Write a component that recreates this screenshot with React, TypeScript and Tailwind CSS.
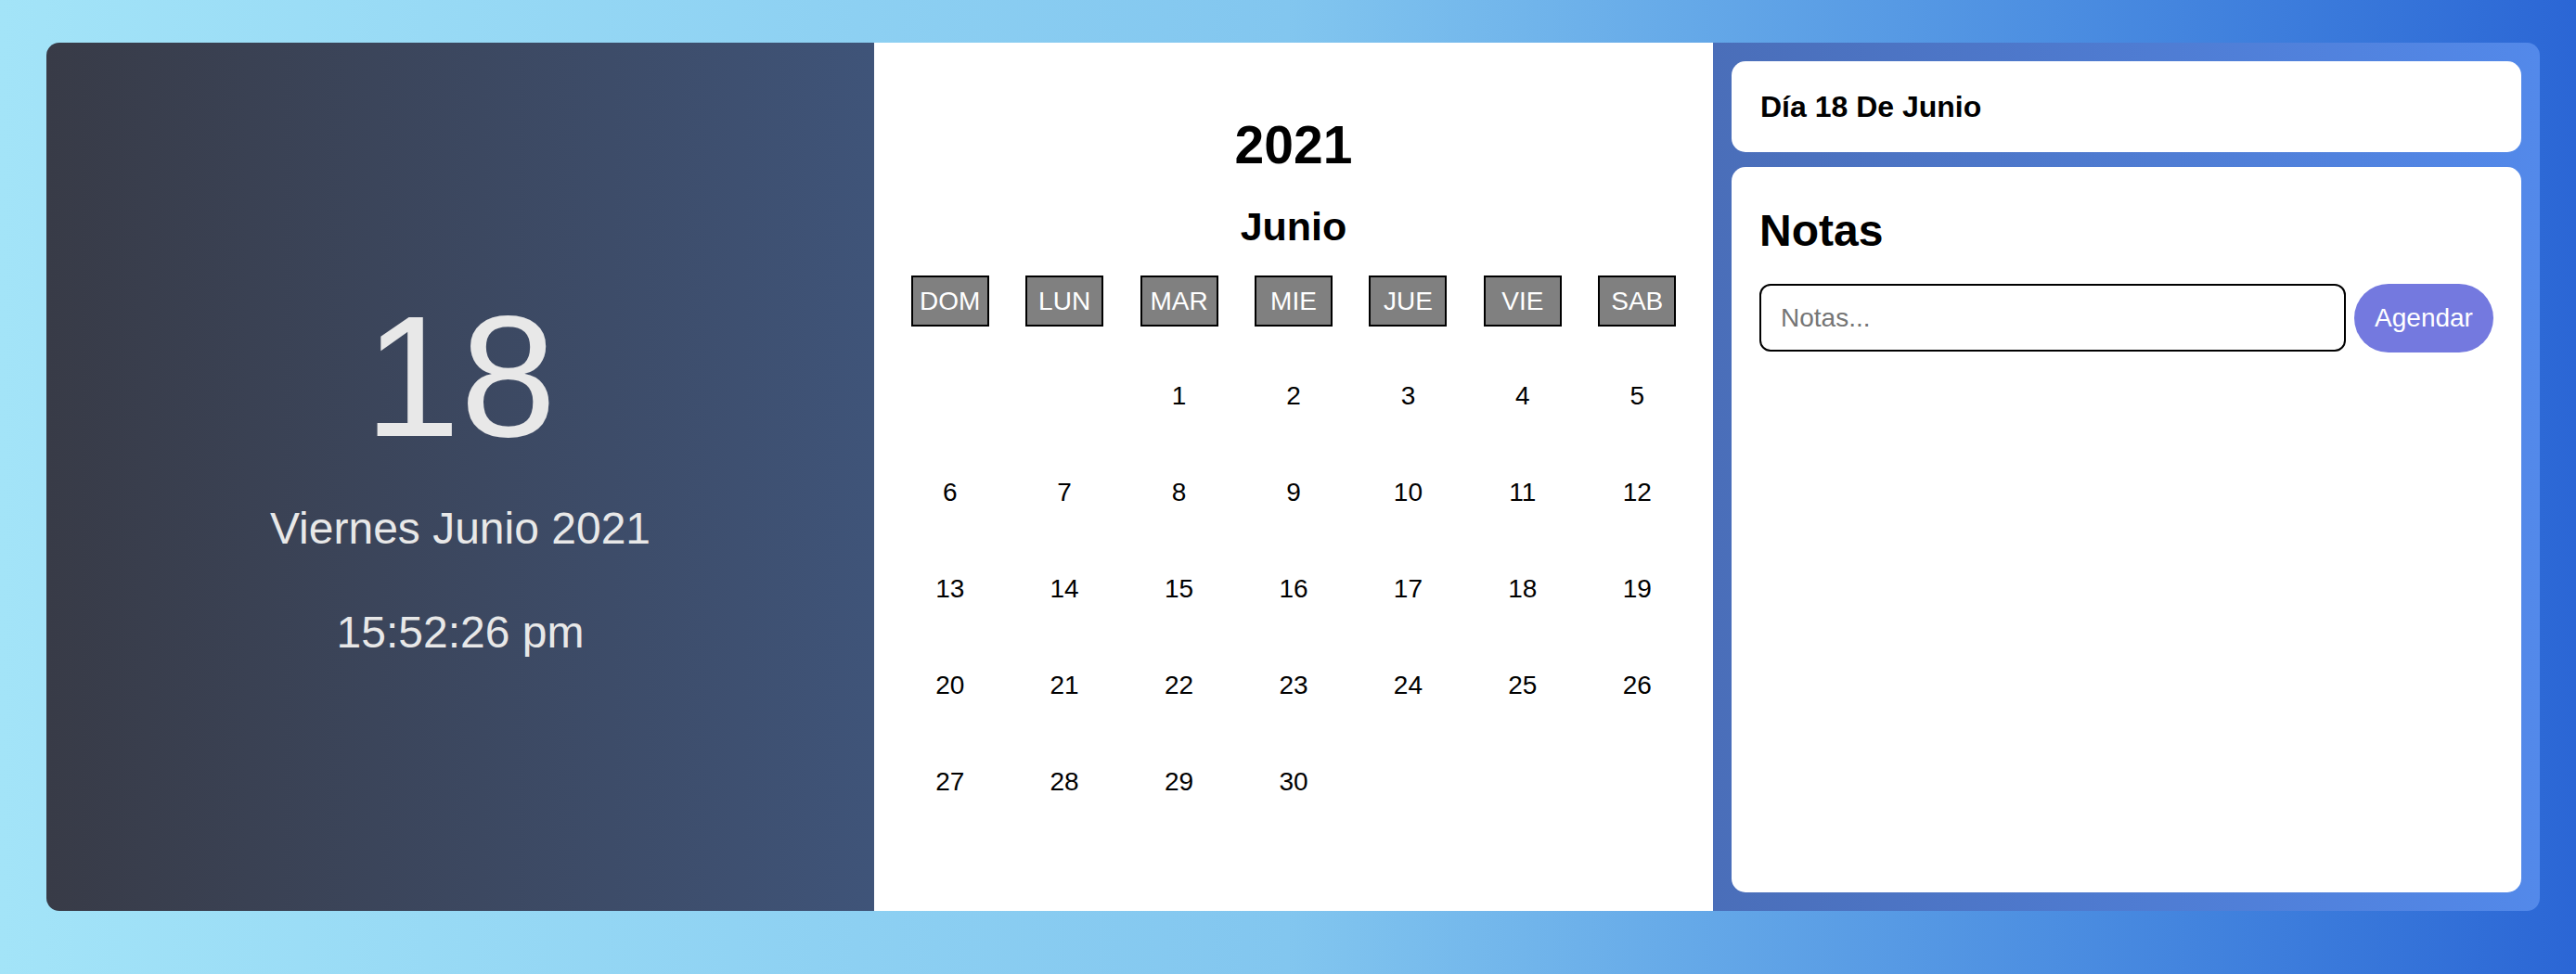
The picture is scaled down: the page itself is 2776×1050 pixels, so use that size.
import { useState, type FC } from "react";

const DIAS = ["DOM", "LUN", "MAR", "MIE", "JUE", "VIE", "SAB"];

// junio 2021 empieza en martes
const CELDAS: (number | null)[] = [
  null,
  null,
  ...Array.from({ length: 30 }, (_, i) => i + 1),
];

const App: FC = () => {
  const [nota, setNota] = useState("");

  return (
    <div className="w-full min-h-screen h-[1050px] bg-linear-to-r from-[#a3e4f8] via-[#82c6ef] via-50% to-[#2b66d5] pl-[50px] pr-[39px] pt-[46px] font-['Liberation_Sans',Arial,sans-serif]">
      <div className="flex h-[936px] rounded-[14px] overflow-hidden">
        {/* reloj */}
        <div className="w-[892px] bg-linear-to-r from-[#383b47] to-[#3f5479] flex flex-col items-center justify-center pb-[10px] text-[#e8e8e8]">
          <div className="text-[186px] leading-none">18</div>
          <div className="mt-[47px] text-[48px] leading-none">Viernes Junio 2021</div>
          <div className="mt-[64px] text-[48px] leading-none">15:52:26 pm</div>
        </div>

        {/* calendario */}
        <div className="w-[904px] bg-white flex flex-col items-center pt-[82px] px-[20px] text-black">
          <h1 className="text-[57px] font-bold leading-none">2021</h1>
          <h2 className="mt-[38px] text-[43px] font-bold leading-none">Junio</h2>
          <div className="mt-[31px] w-full grid grid-cols-7">
            {DIAS.map((d) => (
              <div key={d} className="flex justify-center">
                <div className="w-[84px] h-[55px] bg-[#808080] border-2 border-black flex items-center justify-center text-white text-[28px] leading-none">
                  {d}
                </div>
              </div>
            ))}
          </div>
          <div className="mt-[23px] w-full grid grid-cols-7">
            {CELDAS.map((n, i) => (
              <div key={i} className="h-[104px] flex items-center justify-center text-[28px] leading-none">
                {n ?? ""}
              </div>
            ))}
          </div>
        </div>

        {/* notas */}
        <div className="flex-1 bg-linear-to-r from-[#4a6eb9] to-[#5389ea] p-[20px] flex flex-col gap-[16px]">
          <div className="h-[98px] bg-white rounded-[15px] flex items-center px-[31px]">
            <span className="text-[32px] font-bold leading-none text-black">Día 18 De Junio</span>
          </div>
          <div className="flex-1 bg-white rounded-[15px] px-[30px] pt-[45px]">
            <h2 className="text-[48px] font-bold leading-none text-black">Notas</h2>
            <div className="mt-[33px] flex items-start gap-[9px]">
              <input
                type="text"
                placeholder="Notas..."
                value={nota}
                onChange={(e) => setNota(e.target.value)}
                className="flex-1 min-w-0 h-[73px] border-2 border-black rounded-[12px] px-[21px] text-[28px] text-black placeholder:text-[#757575] focus:outline-none"
              />
              <button className="w-[150px] h-[74px] rounded-full bg-[#7479df] text-white text-[28px]">
                Agendar
              </button>
            </div>
          </div>
        </div>
      </div>
    </div>
  );
};

export default App;
